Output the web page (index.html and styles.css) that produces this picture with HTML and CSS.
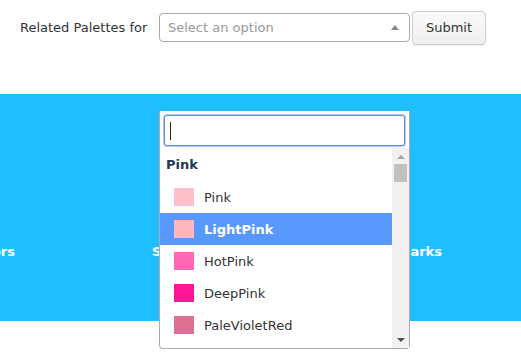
FILE: index.html
```html
<!DOCTYPE html>
<html lang="en">
<head>
    <meta charset="UTF-8">
    <meta name="viewport" content="width=device-width, initial-scale=1.0">
    <title>Related Palettes</title>
    <link rel="stylesheet" href="styles.css">
</head>
<body>
    <form class="toolbar">
        <label class="label">Related Palettes for</label>
        <div class="select">
            <span class="placeholder">Select an option</span>
            <span class="arrow"></span>
        </div>
        <button type="submit" class="submit">Submit</button>
    </form>

    <div class="band">
        <div class="col first"><span>Related Colors</span></div>
        <div class="col second">Shades</div>
        <div class="col third">Bookmarks</div>
    </div>

    <div class="dropdown">
        <div class="search">
            <input type="text" class="searchField" autofocus>
            <span class="caret"></span>
        </div>
        <div class="results">
            <ul class="list">
                <li class="group">Pink</li>
                <li class="option"><span class="swatch" style="background:#ffc0cb"></span>Pink</li>
                <li class="option active"><span class="swatch" style="background:#ffb6c1"></span>LightPink</li>
                <li class="option"><span class="swatch" style="background:#ff69b4"></span>HotPink</li>
                <li class="option"><span class="swatch" style="background:#ff1493"></span>DeepPink</li>
                <li class="option"><span class="swatch" style="background:#db7093"></span>PaleVioletRed</li>
                <li class="option"><span class="swatch" style="background:#c71585"></span>MediumVioletRed</li>
            </ul>
            <div class="scrollbar">
                <span class="up"></span>
                <span class="thumb"></span>
                <span class="spacer"></span>
                <span class="down"></span>
            </div>
        </div>
    </div>
</body>
</html>
```

FILE: styles.css
```css
body {
    margin: 0;
    font-family: "DejaVu Sans", sans-serif;
    font-size: 13px;
    color: #333;
    background: #fff;
    position: relative;
    overflow: hidden;
    height: 356px;
}

.toolbar {
    display: flex;
    align-items: center;
    height: 54px;
    padding-left: 20px;
}

.label {
    width: 139px;
}

.select {
    display: flex;
    align-items: center;
    box-sizing: border-box;
    width: 251px;
    height: 29px;
    margin-top: 1px;
    border: 1px solid #aaa;
    border-radius: 4px;
    padding: 0 8px;
}

.placeholder {
    flex: 1;
    color: #999;
}

.arrow {
    width: 0;
    height: 0;
    border-left: 4px solid transparent;
    border-right: 4px solid transparent;
    border-bottom: 5px solid #888;
    margin-right: 2px;
}

.submit {
    box-sizing: border-box;
    height: 34px;
    width: 74px;
    margin-left: 2px;
    margin-top: 1px;
    border: 1px solid #ccc;
    border-radius: 4px;
    background: linear-gradient(#fafafa, #eee);
    font-family: inherit;
    font-size: 13px;
    color: #333;
    box-shadow: 0 1px 1px rgba(0, 0, 0, 0.08);
}

.band {
    display: flex;
    align-items: center;
    margin-top: 40px;
    height: 227px;
    background: #1fbfff;
    color: #fff;
    font-weight: bold;
    padding-top: 87px;
    box-sizing: border-box;
}

.col {
    white-space: nowrap;
}

.first {
    display: flex;
    justify-content: flex-end;
    width: 15px;
}

.second {
    margin-left: 137px;
}

.third {
    margin-left: auto;
    margin-right: 79px;
}

.dropdown {
    position: absolute;
    left: 159px;
    top: 111px;
    width: 251px;
    height: 238px;
    box-sizing: border-box;
    border: 1px solid #aaa;
    border-top: none;
    border-radius: 0 0 4px 4px;
    background: #fff;
    display: flex;
    flex-direction: column;
}

.search {
    position: relative;
    padding: 4px 4px 2px;
}

.searchField {
    display: block;
    box-sizing: border-box;
    width: 100%;
    height: 31px;
    margin: 0;
    border: 1px solid #5b8fd8;
    border-radius: 3px;
    box-shadow: 0 0 0 1px #b3cbf0;
    outline: none;
    padding: 0 6px;
    background: #fff;
}

.caret {
    position: absolute;
    left: 10px;
    top: 11px;
    width: 1px;
    height: 18px;
    background: #222;
}

.results {
    flex: 1;
    display: flex;
    overflow: hidden;
}

.list {
    flex: 1;
    margin: 0;
    padding: 0;
    list-style: none;
    overflow: hidden;
}

.group {
    height: 33px;
    line-height: 33px;
    padding-left: 6px;
    font-weight: bold;
    color: #243752;
}

.option {
    display: flex;
    align-items: center;
    height: 32px;
    padding-left: 14px;
    color: #333;
}

.option.active {
    background: #5897fb;
    color: #fff;
    font-weight: bold;
}

.swatch {
    width: 20px;
    height: 18px;
    margin-right: 10px;
}

.scrollbar {
    width: 17px;
    background: #f1f1f1;
    display: flex;
    flex-direction: column;
    align-items: center;
}

.up {
    margin-top: 7px;
    border-left: 4px solid transparent;
    border-right: 4px solid transparent;
    border-bottom: 4px solid #a3a3a3;
}

.thumb {
    width: 13px;
    height: 18px;
    margin-top: 5px;
    background: #c1c1c1;
}

.spacer {
    flex: 1;
}

.down {
    margin-bottom: 6px;
    border-left: 4px solid transparent;
    border-right: 4px solid transparent;
    border-top: 4px solid #505050;
}
```
